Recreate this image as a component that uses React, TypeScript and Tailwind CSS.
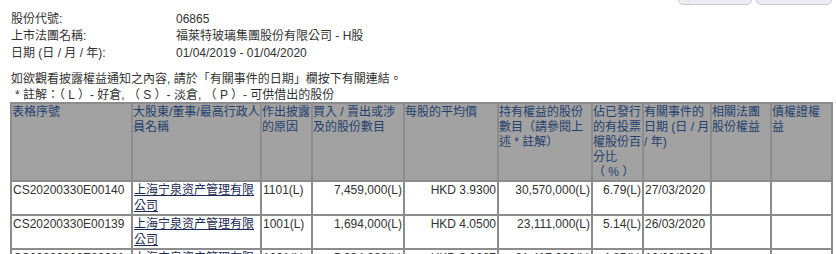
import * as React from "react";

const FONT = "font-['Liberation_Sans','Noto_Sans_CJK_TC',sans-serif]";

interface Row {
  id: string;
  name: string;
  reason: string;
  shares: string;
  price: string;
  holding: string;
  pct: string;
  date: string;
}

const rows: Row[] = [
  {
    id: "CS20200330E00140",
    name: "上海宁泉资产管理有限公司",
    reason: "1101(L)",
    shares: "7,459,000(L)",
    price: "HKD 3.9300",
    holding: "30,570,000(L)",
    pct: "6.79(L)",
    date: "27/03/2020",
  },
  {
    id: "CS20200330E00139",
    name: "上海宁泉资产管理有限公司",
    reason: "1001(L)",
    shares: "1,694,000(L)",
    price: "HKD 4.0500",
    holding: "23,111,000(L)",
    pct: "5.14(L)",
    date: "26/03/2020",
  },
  {
    id: "CS20200320E00081",
    name: "上海宁泉资产管理有限公司",
    reason: "1201(L)",
    shares: "5,334,000(L)",
    price: "HKD 3.8807",
    holding: "21,417,000(L)",
    pct: "4.85(L)",
    date: "19/03/2020",
  },
];

const widths = [121, 129, 51, 92, 94, 94, 51, 68, 60, 61];

// header labels, broken where the page wraps them
const headers: string[][] = [
  ["表格序號"],
  ["大股東/董事/最高行政人", "員名稱"],
  ["作出披露", "的原因"],
  ["買入 / 賣出或涉", "及的股份數目"],
  ["每股的平均價"],
  ["持有權益的股份", "數目（請參閱上", "述 * 註解）"],
  ["佔已發行", "的有投票", "權股份百", "分比", "（ % ）"],
  ["有關事件的", "日期 (日 / 月", "/ 年)"],
  ["相關法團", "股份權益"],
  ["債權證權", "益"],
];

const th =
  "border-2 border-[#8c8c8c] align-top text-left font-normal px-0 pt-[1px] text-[#24406c] leading-[15px] overflow-hidden";
const td = "border-2 border-[#8c8c8c] align-top px-[1px] leading-[16px] text-[#333]";

export default function App() {
  return (
    <div className={`relative w-[836px] h-[254px] overflow-hidden bg-white text-[12px] ${FONT}`}>
      <div className="absolute top-[-13px] right-[4px] flex gap-[4px]">
        <div className="w-[74px] h-[18px] rounded-[5px] border border-[#c9c9d2] bg-[#ececf1] text-[11px] text-[#444] flex items-end justify-center pb-[1px]">
          翻印版本 ⎙
        </div>
        <div className="w-[76px] h-[18px] rounded-[5px] border border-[#c9c9d2] bg-[#ececf1] text-[11px] text-[#444] flex items-end justify-center pb-[1px]">
          返回列表 ▭
        </div>
      </div>

      <div className="pl-[11px] pt-[11px] text-[#333] leading-[17px]">
        <div className="flex">
          <span className="w-[165px]">股份代號:</span>
          <span>06865</span>
        </div>
        <div className="flex">
          <span className="w-[165px]">上市法團名稱:</span>
          <span>福萊特玻璃集團股份有限公司 - H股</span>
        </div>
        <div className="flex">
          <span className="w-[165px]">日期 (日 / 月 / 年):</span>
          <span>01/04/2019 - 01/04/2020</span>
        </div>
        <div className="mt-[9px] leading-[16px]">
          如欲觀看披露權益通知之內容, 請於「有關事件的日期」欄按下有關連結。
        </div>
        <div className="leading-[16px] pl-[4px]">
          * 註解：（ L ）- 好倉, （ S ）- 淡倉, （ P ）- 可供借出的股份
        </div>
      </div>

      <table className="ml-[10px] -mt-[1px] table-fixed border-collapse w-[823px]">
        <colgroup>
          {widths.map((w, i) => (
            <col key={i} style={{ width: w }} />
          ))}
        </colgroup>
        <thead>
          <tr className="bg-[#a2a2a2] h-[78px]">
            {headers.map((lines, i) => (
              <th key={i} className={th}>
                {lines.map((l, j) => (
                  <div key={j} className="whitespace-nowrap">
                    {l}
                  </div>
                ))}
              </th>
            ))}
          </tr>
        </thead>
        <tbody>
          {rows.map((r) => (
            <tr key={r.id} className="h-[34px]">
              <td className={td}>{r.id}</td>
              <td className={td}>
                <span className="text-[#1c2b55] underline">{r.name}</span>
              </td>
              <td className={td}>{r.reason}</td>
              <td className={`${td} text-right`}>{r.shares}</td>
              <td className={`${td} text-right`}>{r.price}</td>
              <td className={`${td} text-right`}>{r.holding}</td>
              <td className={`${td} text-right`}>{r.pct}</td>
              <td className={td}>{r.date}</td>
              <td className={td}></td>
              <td className={td}></td>
            </tr>
          ))}
        </tbody>
      </table>
    </div>
  );
}
